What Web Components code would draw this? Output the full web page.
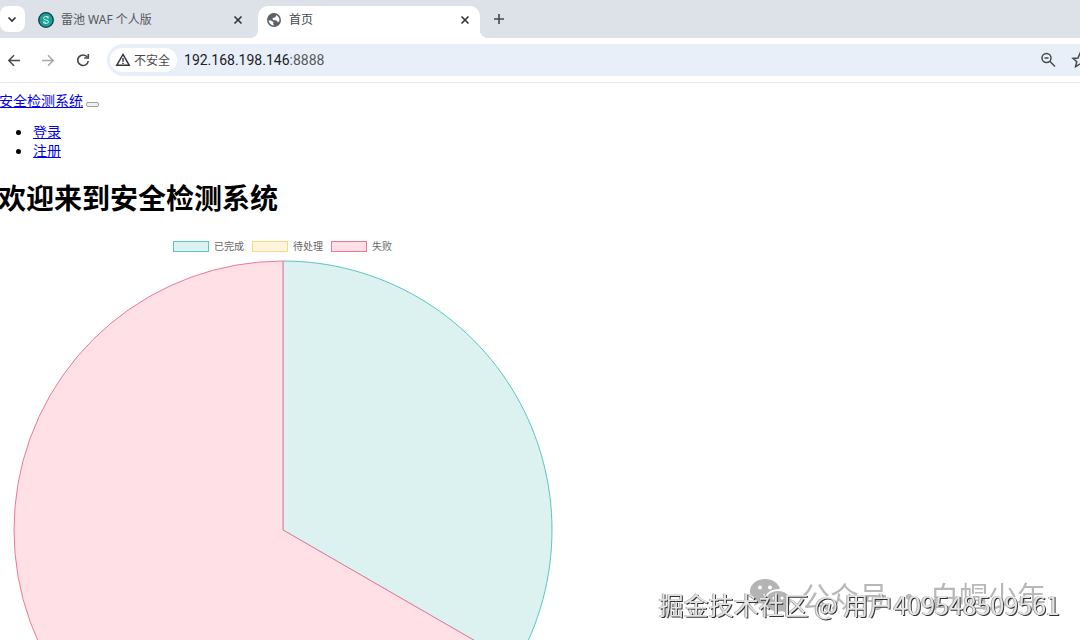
<!DOCTYPE html>
<html lang="zh-CN">
<head>
<meta charset="utf-8">
<title>首页</title>
<style>
html, body { margin: 0; height: 100%; }
body { display: flex; flex-direction: column; overflow: hidden; background: #fff; color: #000; font-family: "Noto Sans", "Noto Sans CJK SC", sans-serif; }
</style>
</head>
<body>
<browser-window>
  <tab-strip slot="tabs">
    <browser-tab label="雷池 WAF 个人版">
      <svg slot="icon" width="16" height="16" viewBox="0 0 16 16"><circle cx="8" cy="8" r="7.3" fill="#1aa094" stroke="#153c42" stroke-width="1.3"/><path d="M11 5.3C9 3.6 5 4.7 5.4 6.6 5.8 8.4 10.8 7.6 10.6 9.8 10.4 11.7 6.8 12 5 10.4M8 4.4 10.4 6.4M5.5 9.2 8.3 11.4" fill="none" stroke="#d6fbf4" stroke-width="1"/></svg>
    </browser-tab>
    <browser-tab label="首页" active>
      <svg slot="icon" width="16" height="16" viewBox="0 0 16 16"><circle cx="8" cy="8" r="6.200" fill="#fff" stroke="#5f6368" stroke-width="1.500"/><path fill="#5f6368" d="M7.500 1.500C4 1.500 1.500 4.500 1.500 8.300L5 8.500 7.600 10.300 7 11.500 8.500 14.500C12 14.500 14.500 11.800 14.500 8.800L12 10.300 10.500 8.500 7 8 6.500 6 9.500 5.200 10.500 2Z"/></svg>
    </browser-tab>
  </tab-strip>
  <tool-bar slot="toolbar"></tool-bar>
  <site-page></site-page>
</browser-window>
<water-mark></water-mark>

<script>
const define = (name, html, setup) => {
  const template = document.createElement('template');
  template.innerHTML = html;
  customElements.define(name, class extends HTMLElement {
    constructor() {
      super();
      this.attachShadow({ mode: 'open' }).append(template.content.cloneNode(true));
    }
    connectedCallback() { if (setup) setup(this, this.shadowRoot); }
  });
};

define('browser-window', `
<style>
:host { display: flex; flex-direction: column; flex: 1; min-height: 0; }
main { flex: 1; min-height: 0; overflow: hidden; }
</style>
<slot name="tabs"></slot><slot name="toolbar"></slot>
<main><slot></slot></main>`);

define('tab-strip', `
<style>
:host { display: flex; height: 38px; background: #dde1e8; }
button { border: 0; padding: 0; display: grid; place-items: center; background: none; }
.search { width: 25px; height: 26px; margin-top: 6px; border-radius: 8px; background: #fff; }
.add { width: 38px; height: 38px; }
</style>
<button class="search" aria-label="搜索标签页"><svg width="24" height="16" viewBox="0 0 24 16"><path d="M7.500 6.500 11 10 14.500 6.500" fill="none" stroke="#303236" stroke-width="1.700"/></svg></button>
<slot></slot>
<button class="add" aria-label="新标签页"><svg width="12" height="12" viewBox="0 0 12 12"><path d="M6 1V11M1 6H11" stroke="#45484d" stroke-width="1.600"/></svg></button>`);

define('browser-tab', `
<style>
:host { display: flex; align-items: center; width: 207px; height: 28px; margin-top: 6px; padding: 0 13px; gap: 7px; color: #55585d; box-sizing: content-box; font-size: 12px; line-height: 16px; }
:host([active]) { position: relative; width: 206px; height: 32px; padding: 0 8px; background: #fff; border-radius: 10px 10px 0 0; color: #45484d; }
:host([active])::before, :host([active])::after { content: ""; position: absolute; bottom: 0; width: 8px; height: 8px; }
:host([active])::before { right: 100%; background: radial-gradient(circle at 0 0, transparent 8px, #fff 8px); }
:host([active])::after { left: 100%; background: radial-gradient(circle at 100% 0, transparent 8px, #fff 8px); }
span { flex: 1; }
button { border: 0; background: none; padding: 0; display: grid; color: #303236; }
:host([active]) div, :host([active]) span, :host([active]) button { margin-bottom: 4px; }
div { display: grid; }
</style>
<div><slot name="icon"></slot></div><span></span>
<button aria-label="关闭"><svg width="14" height="14" viewBox="0 0 14 14"><path d="M3.500 3.500 10.500 10.500M10.500 3.500 3.500 10.500" stroke="currentColor" stroke-width="1.600"/></svg></button>`,
(el, root) => { root.querySelector('span').textContent = el.getAttribute('label'); });

define('tool-bar', `
<style>
:host { display: flex; align-items: center; height: 44px; border-bottom: 1px solid #e6e6ea; background: #fff; overflow: hidden; }
button { border: 0; background: none; padding: 0; display: grid; }
nav { display: flex; gap: 18px; padding-left: 6px; }
.address { flex: 1; display: flex; align-items: center; margin-left: 15px; height: 32px; border-radius: 16px 0 0 16px; background: #e9eff9; }
.security { display: flex; align-items: center; gap: 3px; height: 24px; margin-left: 3px; padding: 0 7px 0 5px; border-radius: 12px; background: #fff; color: #45484d; font-size: 12px; font-family: inherit; }
label { flex: 1; margin-left: 7px; font: 14px/20px Roboto, sans-serif; color: #202124; }
label span { color: #54575c; }
.tools { display: flex; gap: 14px; margin-right: -9px; }
</style>
<nav>
<button aria-label="后退"><svg width="16" height="16" viewBox="0 0 16 16" fill="none" stroke="#45484d" stroke-width="1.500"><path d="M14 8.500H3M8 3.300 2.800 8.500 8 13.700"/></svg></button>
<button aria-label="前进"><svg width="16" height="16" viewBox="0 0 16 16" fill="none" stroke="#a6a8ab" stroke-width="1.500"><path d="M2 8.500H13M8 3.300 13.200 8.500 8 13.700"/></svg></button>
<button aria-label="重新加载"><svg width="18" height="16" viewBox="0 0 18 16" fill="none" stroke="#45484d" stroke-width="1.600"><path d="M13.400 5.200A5.300 5.300 0 1 0 14.300 9"/><path d="M14.300 2V6H10.200"/></svg></button>
</nav>
<div class="address">
<button class="security"><svg width="16" height="16" viewBox="0 0 16 16" fill="none" stroke="#303236" stroke-width="1.400"><path d="M8 2.300 14.300 13.300H1.700Z"/><path d="M8 6V9.700M8 10.700V12"/></svg>不安全</button>
<label>192.168.198.146<span>:8888</span></label>
<div class="tools">
<button aria-label="缩放"><svg width="18" height="18" viewBox="0 0 18 18" fill="none" stroke="#45484d" stroke-width="1.500"><circle cx="7.500" cy="7" r="4.500"/><path d="M10.800 10.300 16 15.500M5.500 7H9.500"/></svg></button>
<button aria-label="收藏"><svg width="18" height="18" viewBox="0 0 18 18" fill="none" stroke="#45484d" stroke-width="1.500"><path d="M9 2.400 11 7 16 7.400 12.200 10.700 13.400 15.600 9 13 4.600 15.600 5.800 10.700 2 7.400 7 7Z"/></svg></button>
</div>
</div>`);

define('site-page', `
<style>
:host { display: block; padding-top: 8px; font-family: "Noto Sans CJK SC", sans-serif; font-size: 14px; line-height: 19px; }
a { color: #0000ee; }
nav { margin-left: -1px; }
nav button { width: 13px; height: 5px; padding: 0; border: 1px solid #a0a0a0; border-radius: 2px; background: #efefef; }
ul { margin: 12px 0 0; padding-left: 34px; }
h1 { margin: 18px 0 0 -2px; font-size: 28px; line-height: 38px; font-weight: 700; }
</style>
<nav><a href="#">安全检测系统</a> <button aria-label="菜单"></button>
<ul><li><a href="#">登录</a></li><li><a href="#">注册</a></li></ul></nav>
<h1>欢迎来到安全检测系统</h1>
<pie-chart></pie-chart>`);

define('pie-chart', `
<style>
:host { display: block; width: 565px; margin-top: 22px; }
ul { display: flex; justify-content: center; gap: 8px; margin: 0; padding: 0; list-style: none; color: #666; font-size: 10px; line-height: 16px; }
li { display: flex; align-items: center; gap: 5px; }
i { box-sizing: border-box; width: 36px; height: 11px; border: 1px solid; }
.done i { background: #dbf2f2; border-color: #5cc5bc; }
.wait i { background: #fff5dd; border-color: #f5d983; }
.fail i { background: #ffe0e6; border-color: #ef7896; }
svg { display: block; margin: 6px auto 0; }
</style>
<ul><li class="done"><i></i>已完成</li><li class="wait"><i></i>待处理</li><li class="fail"><i></i>失败</li></ul>
<svg width="540" height="540" viewBox="-270 -270 540 540" role="img" aria-label="检测任务状态">
<path d="M0 0V-269A269 269 0 0 1 232.960 134.500Z" fill="#dbf2f0" stroke="#5cc5c0"/>
<path d="M0 0 232.960 134.500A269 269 0 1 1 0 -269Z" fill="#ffe0e6" stroke="#ef7896"/>
</svg>`);

define('water-mark', `
<style>
:host { position: fixed; right: 20px; bottom: 17px; pointer-events: none; font-family: "Noto Sans CJK SC", sans-serif; white-space: nowrap; }
.source { position: absolute; right: 14px; bottom: 8px; display: flex; align-items: center; gap: 8px; font-size: 29px; line-height: 40px; font-weight: 400; color: #b8b8b8; }
.author { position: relative; font-size: 25px; line-height: 38px; color: #e4e4e4; text-shadow: 1px 1px 0 #303030, -1px 0 0 #aaa; }
</style>
<div class="source"><svg width="44" height="38" viewBox="0 0 44 38"><path fill="#b4b4b4" fill-rule="evenodd" d="M16 3C7.500 3 1 8.500 1 15.500c0 4 2 7.200 5.500 9.500L5 30l5.500-3c1.500.4 3 .7 5 .7C14 19 20 13 31 13 29.500 7 23.500 3 16 3ZM11 9.500a2 2 0 1 1 0 4 2 2 0 0 1 0-4ZM21 9.500a2 2 0 1 1 0 4 2 2 0 0 1 0-4Z"/><path fill="#b4b4b4" fill-rule="evenodd" d="M29 15c-7 0-12.500 4.500-12.500 10.300S22 35.500 29 35.500c1.500 0 3-.2 4.300-.6L38 37l-1.300-4c3-2 4.800-4.600 4.800-7.700C41.500 19.500 36 15 29 15ZM25 20.500a1.600 1.600 0 1 1 0 3.200 1.600 1.600 0 0 1 0-3.200ZM33 20.500a1.600 1.600 0 1 1 0 3.200 1.600 1.600 0 0 1 0-3.200Z"/></svg><span>公众号 · 白帽少年</span></div>
<div class="author">掘金技术社区 @ 用户409548509561</div>`);
</script>
</body>
</html>
